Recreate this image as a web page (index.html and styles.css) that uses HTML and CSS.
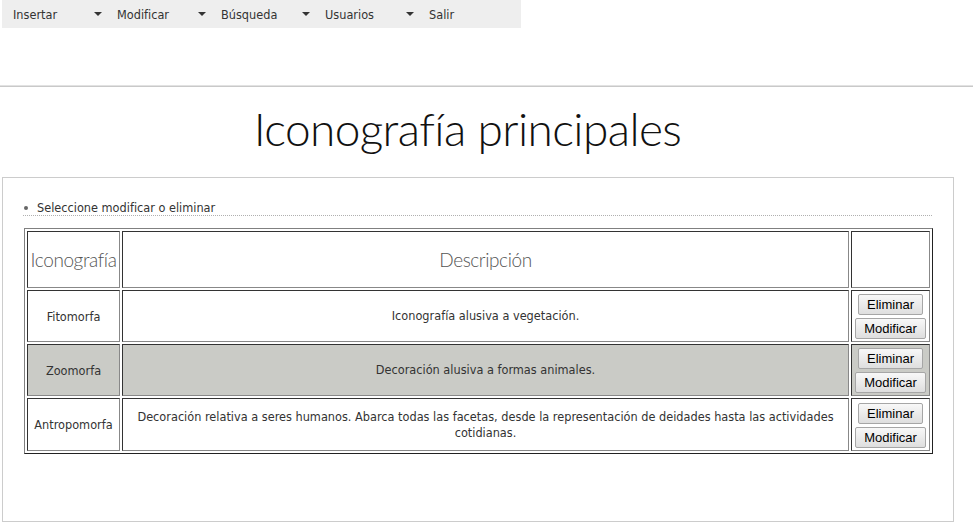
FILE: index.html
```html
<!DOCTYPE html>
<html lang="es">
<head>
<meta charset="utf-8">
<title>Iconografía principales</title>
<link rel="stylesheet" href="styles.css">
</head>
<body>
<nav class="menubar">
  <div class="menu-item">Insertar<span class="caret"></span></div>
  <div class="menu-item">Modificar<span class="caret"></span></div>
  <div class="menu-item">Búsqueda<span class="caret"></span></div>
  <div class="menu-item">Usuarios<span class="caret"></span></div>
  <div class="menu-item last">Salir</div>
</nav>
<div class="rule"></div>
<h1 class="title">Iconografía principales</h1>
<div class="panel">
  <ul class="notes">
    <li>Seleccione modificar o eliminar</li>
  </ul>
  <table class="grid">
    <tr class="head">
      <th class="c1">Iconografía</th>
      <th class="c2">Descripción</th>
      <th class="c3"></th>
    </tr>
    <tr class="row">
      <td class="c1">Fitomorfa</td>
      <td class="c2">Iconografía alusiva a vegetación.</td>
      <td class="c3"><div class="actions"><button class="btn">Eliminar</button><button class="btn">Modificar</button></div></td>
    </tr>
    <tr class="row alt">
      <td class="c1">Zoomorfa</td>
      <td class="c2">Decoración alusiva a formas animales.</td>
      <td class="c3"><div class="actions"><button class="btn">Eliminar</button><button class="btn">Modificar</button></div></td>
    </tr>
    <tr class="row tall">
      <td class="c1">Antropomorfa</td>
      <td class="c2">Decoración relativa a seres humanos. Abarca todas las facetas, desde la representación de deidades hasta las actividades cotidianas.</td>
      <td class="c3"><div class="actions"><button class="btn">Eliminar</button><button class="btn">Modificar</button></div></td>
    </tr>
  </table>
</div>
</body>
</html>
```
FILE: styles.css
```css
html, body {
  margin: 0;
  padding: 0;
  background: #fff;
}
body {
  font-family: "DejaVu Sans Condensed", "DejaVu Sans", sans-serif;
  font-stretch: condensed;
  font-size: 12.6px;
  color: #333;
}
.menubar {
  display: flex;
  margin-left: 2px;
  width: 519px;
  height: 28px;
  background: #eeeeee;
}
.menu-item {
  position: relative;
  width: 104px;
  box-sizing: border-box;
  padding-left: 11px;
  line-height: 29px;
  color: #333;
}
.menu-item.last { width: 103px; }
.caret {
  position: absolute;
  left: 92px;
  top: 12px;
  width: 0;
  height: 0;
  border-left: 4px solid transparent;
  border-right: 4px solid transparent;
  border-top: 4px solid #333;
}
.rule {
  margin-top: 57px;
  height: 1px;
  border-top: 1px solid #e2e2e2;
  background: #c9c9c9;
}
.title {
  margin: 14px 0 0 0;
  padding-right: 38px;
  text-align: center;
  font-family: Lato, "Open Sans", sans-serif;
  font-weight: 300;
  font-size: 46px;
  letter-spacing: -0.6px;
  line-height: 56px;
  color: #111;
  height: 76px;
  font-stretch: normal;
}
.panel {
  margin-left: 2px;
  width: 952px;
  height: 345px;
  box-sizing: border-box;
  border: 1px solid #cccccc;
  padding: 22px 21px 0 20px;
}
.notes {
  margin: 0;
  padding: 0;
  list-style: none;
}
.notes li {
  display: flex;
  align-items: center;
  gap: 9px;
  line-height: 15px;
  border-bottom: 1px dotted #b0b0b0;
}
.notes li::before {
  content: "";
  width: 4px;
  height: 4px;
  margin-left: 1px;
  border-radius: 50%;
  background: #666;
}
.grid {
  margin: 12px 0 0 1px;
  width: 909px;
  border-collapse: separate;
  border-spacing: 2px;
  border: 1px solid;
  border-color: #808080 #222 #222 #808080;
}
.grid th, .grid td {
  border: 1px solid;
  border-color: #333 #888 #888 #333;
  padding: 0 1px;
  text-align: center;
  vertical-align: middle;
}
.grid th {
  font-family: Lato, "Open Sans", sans-serif;
  font-weight: 300;
  font-size: 19px;
  letter-spacing: -0.4px;
  color: #555;
  font-stretch: normal;
  padding: 0;
}
.head { height: 57px; }
.row { height: 52px; }
.row.tall { height: 53px; }
.row td.c2 { padding: 0 12px; line-height: 16px; }
.alt td { background: #cacbc6; }
.c1 { width: 89px; }
.c3 { width: 75px; }
.actions {
  display: flex;
  flex-direction: column;
  align-items: center;
  gap: 3px;
  padding: 2px 0 1px;
}
.btn {
  height: 21px;
  padding: 0 8px;
  font-family: "Liberation Sans", Arial, sans-serif;
  font-size: 13px;
  color: #000;
  background: linear-gradient(#f8f8f8, #dedede);
  border: 1px solid #a6a6a6;
  border-radius: 2px;
}
```
